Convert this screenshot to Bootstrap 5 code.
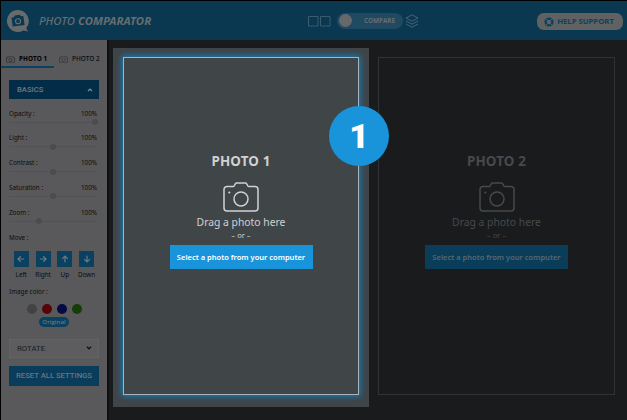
<!DOCTYPE html>
<html lang="en">
<head>
<meta charset="utf-8">
<meta name="viewport" content="width=device-width, initial-scale=1">
<title>Photo Comparator</title>
<link href="https://cdn.jsdelivr.net/npm/bootstrap@5.3.0/dist/css/bootstrap.min.css" rel="stylesheet">
<style>
body{background:#191b1d;font-family:"Noto Sans","Open Sans",sans-serif;width:627px;height:420px;overflow:hidden;border-top:1px solid #000;border-left:1px solid #000;line-height:1}
svg{display:block;flex:none}
.topbar{height:39px;background:#0a3850;color:#666d72;padding:0 4px 0 6px}
.brand-title{font:italic 500 11.3px/14px "Noto Sans",sans-serif;margin-left:10px;width:116px;white-space:nowrap;letter-spacing:.03px}
.brand-title b{font-weight:700}
.mode-group{margin-left:153px;width:113px}
.compare-switch{width:66px;height:16px;border-radius:8px;background:#1f4a62;margin:0 2px 0 6px;padding:0 8px 0 2px;font:700 6.3px/16px "Open Sans",sans-serif}
.knob{width:13px;height:13px;border-radius:50%;background:#66686a}
.help-pill{width:86px;height:17px;border-radius:7px;background:#5f6163;color:#0d4160;font:700 7.7px/17px "Open Sans",sans-serif;white-space:nowrap;margin-top:2px;gap:3px;padding-right:2px}
.side{width:108px;height:380px;background:#59595b;border-right:2px solid #0e0f11;color:#0c0c0d;font-size:6.3px;flex:none}
.tab-row{height:28px;padding-top:12px;font:600 6.4px/14px "Open Sans",sans-serif;color:#101011}
.tab-item{width:53px;height:16px;padding-left:5px;gap:4px;white-space:nowrap}
.tab-item.current{border-bottom:2px solid #0b4263;font-weight:700;color:#000}
.tab-item+.tab-item{height:14px}
.fold{width:90px;height:19px;margin:0 8px;padding:0 6px 0 8px;font:500 7.7px/19px Roboto,sans-serif}
.fold-basics{margin-top:12px;background:#032c48;color:#6f7a81}
.fold-rotate{margin-top:12px;background:#5d5d5f;border:1px solid #636365;color:#1b1b1c;font-size:7.8px;font-weight:400;padding-left:7px}
.setting{height:24.75px;padding:10.5px 10px 0 8px;line-height:8px}
.setting .track{height:1px;background:#525254;margin-top:4px;position:relative}
.setting .thumb{position:absolute;top:-2.5px;width:6px;height:6px;border-radius:50%;background:#4c4c4d}
.label-move{padding:11px 8px 0;line-height:8px}
.label-color{padding:9px 8px 0;line-height:8px}
.move-row{gap:6.3px;padding-left:12.5px;margin-top:9px}
.move-item{width:15.5px}
.move-btn{width:15px;height:16px;background:#0b4160}
.move-item span{line-height:8px;margin-top:4px}
.swatches{gap:5px;padding:8px 0 0 26px}
.swatch{width:10px;height:10px;border-radius:50%}
.tag{width:30px;height:10px;border-radius:5px;background:#0b4160;color:#69757c;font:600 6.1px/10px "Open Sans",sans-serif;margin:3px 0 0 38px}
.reset{width:90px;height:20px;margin:8.5px 8px 0;background:#0a3d5b;color:#6a757b;font:500 7.7px/20px Roboto,sans-serif;white-space:nowrap}
.zone-wrap{width:256px;height:359px;margin-top:8px;padding:9px 10px}
.zone-on{background:#404548;margin-left:4px}
.zone-off{margin-left:-1px}
.zone{height:338px;width:236px;border:1px solid #303234;padding-top:94px;color:#48494b}
.zone-off .zone{width:237px}
.zone-on .zone{border-color:#a7b5bd;box-shadow:0 0 5px 1px #147bb9,0 0 9px 1px rgba(20,120,180,.3);color:#cfd1d2}
.zone h2{font:700 13.4px/18px "Noto Sans",sans-serif;margin:0;letter-spacing:.15px}
.zone .cam{margin-top:12px}
.drop-text{font-size:10.35px;line-height:14px;margin-top:3px}
.or-text{font-size:7.6px;line-height:8px;margin-top:2px}
.pick{width:143px;height:24px;border-radius:0;background:#0a3d59;color:#566873;font:600 7.52px/24px "Noto Sans",sans-serif;padding:0;border:0;margin-top:6px;white-space:nowrap}
.zone-on .pick{background:#1994db;color:#fff}
.step{position:absolute;left:329px;top:106px;width:60px;height:60px;border-radius:50%;background:#1994db;color:#fff;font:900 34px/60px Roboto,sans-serif}
</style>
</head>
<body>
<svg width="0" height="0" class="position-absolute">
<symbol id="camera" viewBox="0 0 36 30"><path d="M4 4.500h6.500c1.200 0 1.200-3.500 3-3.500h9c1.800 0 1.800 3.500 3 3.500H32a3 3 0 0 1 3 3V26a3 3 0 0 1-3 3H4a3 3 0 0 1-3-3V7.500a3 3 0 0 1 3-3z" fill="none" stroke="currentColor" stroke-width="1.500"/><circle cx="18" cy="17" r="7" fill="none" stroke="currentColor" stroke-width="1.500"/><circle cx="6.300" cy="10.500" r="1.100" fill="currentColor"/></symbol>
<symbol id="arrow" viewBox="0 0 8 8"><path d="M7.200 4H1M3.800 1.200L1 4l2.800 2.800" fill="none" stroke="#6c7b84" stroke-width="1.200"/></symbol>
</svg>
<header class="topbar d-flex align-items-center">
  <svg width="22" height="22" viewBox="0 0 22 22"><path d="M11 0a11 11 0 1 0 5.500 20.500L21 21.500l-1.800-3.500A11 11 0 0 0 11 0z" fill="#686b6d"/><g transform="rotate(-8 11 11)"><path d="M5 6.800h2.500l1-1.800h5l1 1.800H17v9H5z" fill="#0a3850"/><circle cx="11" cy="11.200" r="3.100" fill="#686b6d"/><circle cx="11" cy="11.200" r="1.900" fill="#0a3850"/></g></svg>
  <div class="brand-title">PHOTO <b>COMPARATOR</b></div>
  <div class="mode-group d-flex align-items-center">
    <svg width="23" height="12" viewBox="0 0 23 12"><path d="M.5 1.500h9.500v9.500H.5zM12.500 1.500H22v9.500h-9.500z" fill="none" stroke="#395c70"/></svg>
    <div class="compare-switch d-flex align-items-center justify-content-between"><i class="knob"></i><span>COMPARE</span></div>
    <svg width="14" height="14" viewBox="0 0 14 14"><path d="M7 .8l6 3.200-6 3.200L1 4zM1 7l6 3.200L13 7M1 10l6 3.200 6-3.200" fill="none" stroke="#4c6878" stroke-width=".9"/></svg>
  </div>
  <div class="help-pill d-flex align-items-center justify-content-center ms-auto">
    <svg width="10" height="10" viewBox="0 0 10 10"><circle cx="5" cy="5" r="3.400" fill="none" stroke="#0d4160" stroke-width="2.400"/><path d="M1.400 1.400l2 2M8.600 1.400l-2 2M1.400 8.600l2-2M8.600 8.600l-2-2" stroke="#5f6163" stroke-width="1"/></svg>
    <span>HELP SUPPORT</span>
  </div>
</header>
<main class="d-flex">
  <aside class="side">
    <div class="tab-row d-flex">
      <div class="tab-item current d-flex align-items-center"><svg width="9" height="7"><use href="#camera"/></svg><span>PHOTO 1</span></div>
      <div class="tab-item d-flex align-items-center"><svg width="9" height="7"><use href="#camera"/></svg><span>PHOTO 2</span></div>
    </div>
    <div class="fold fold-basics d-flex align-items-center justify-content-between"><span>BASICS</span><svg width="6" height="4" viewBox="0 0 6 4"><path d="M1 3l2-2 2 2" fill="none" stroke="#7f8a90" stroke-width="1.200"/></svg></div>
    <div class="setting"><div class="d-flex justify-content-between"><span>Opacity :</span><span>100%</span></div><div class="track"><i class="thumb" style="left:83px"></i></div></div>
    <div class="setting"><div class="d-flex justify-content-between"><span>Light :</span><span>100%</span></div><div class="track"><i class="thumb" style="left:41px"></i></div></div>
    <div class="setting"><div class="d-flex justify-content-between"><span>Contrast :</span><span>100%</span></div><div class="track"><i class="thumb" style="left:41px"></i></div></div>
    <div class="setting"><div class="d-flex justify-content-between"><span>Saturation :</span><span>100%</span></div><div class="track"><i class="thumb" style="left:41px"></i></div></div>
    <div class="setting"><div class="d-flex justify-content-between"><span>Zoom :</span><span>100%</span></div><div class="track"><i class="thumb" style="left:27px"></i></div></div>
    <div class="label-move">Move :</div>
    <div class="move-row d-flex">
      <div class="move-item d-flex flex-column align-items-center"><div class="move-btn d-flex align-items-center justify-content-center"><svg width="8" height="8"><use href="#arrow"/></svg></div><span>Left</span></div>
      <div class="move-item d-flex flex-column align-items-center"><div class="move-btn d-flex align-items-center justify-content-center"><svg width="8" height="8" viewBox="0 0 8 8"><use href="#arrow" width="8" height="8" transform="rotate(180 4 4)"/></svg></div><span>Right</span></div>
      <div class="move-item d-flex flex-column align-items-center"><div class="move-btn d-flex align-items-center justify-content-center"><svg width="8" height="8" viewBox="0 0 8 8"><use href="#arrow" width="8" height="8" transform="rotate(90 4 4)"/></svg></div><span>Up</span></div>
      <div class="move-item d-flex flex-column align-items-center"><div class="move-btn d-flex align-items-center justify-content-center"><svg width="8" height="8" viewBox="0 0 8 8"><use href="#arrow" width="8" height="8" transform="rotate(-90 4 4)"/></svg></div><span>Down</span></div>
    </div>
    <div class="label-color">Image color :</div>
    <div class="swatches d-flex"><i class="swatch" style="background:#434344"></i><i class="swatch" style="background:#550509"></i><i class="swatch" style="background:#050a43"></i><i class="swatch" style="background:#153d09"></i></div>
    <div class="tag text-center">Original</div>
    <div class="fold fold-rotate d-flex align-items-center justify-content-between"><span>ROTATE</span><svg width="6" height="4" viewBox="0 0 6 4"><path d="M1 .8l2 2 2-2" fill="none" stroke="#111" stroke-width="1.300"/></svg></div>
    <div class="reset text-center">RESET ALL SETTINGS</div>
  </aside>
  <section class="zone-wrap zone-on"><div class="zone d-flex flex-column align-items-center">
    <h2>PHOTO 1</h2><svg class="cam" width="36" height="30"><use href="#camera"/></svg>
    <div class="drop-text">Drag a photo here</div><div class="or-text">– or –</div><button class="btn pick">Select a photo from your computer</button>
  </div></section>
  <section class="zone-wrap zone-off"><div class="zone d-flex flex-column align-items-center">
    <h2>PHOTO 2</h2><svg class="cam" width="36" height="30"><use href="#camera"/></svg>
    <div class="drop-text">Drag a photo here</div><div class="or-text">– or –</div><button class="btn pick">Select a photo from your computer</button>
  </div></section>
</main>
<div class="step text-center">1</div>
<script src="https://cdn.jsdelivr.net/npm/bootstrap@5.3.0/dist/js/bootstrap.bundle.min.js"></script>
</body>
</html>
